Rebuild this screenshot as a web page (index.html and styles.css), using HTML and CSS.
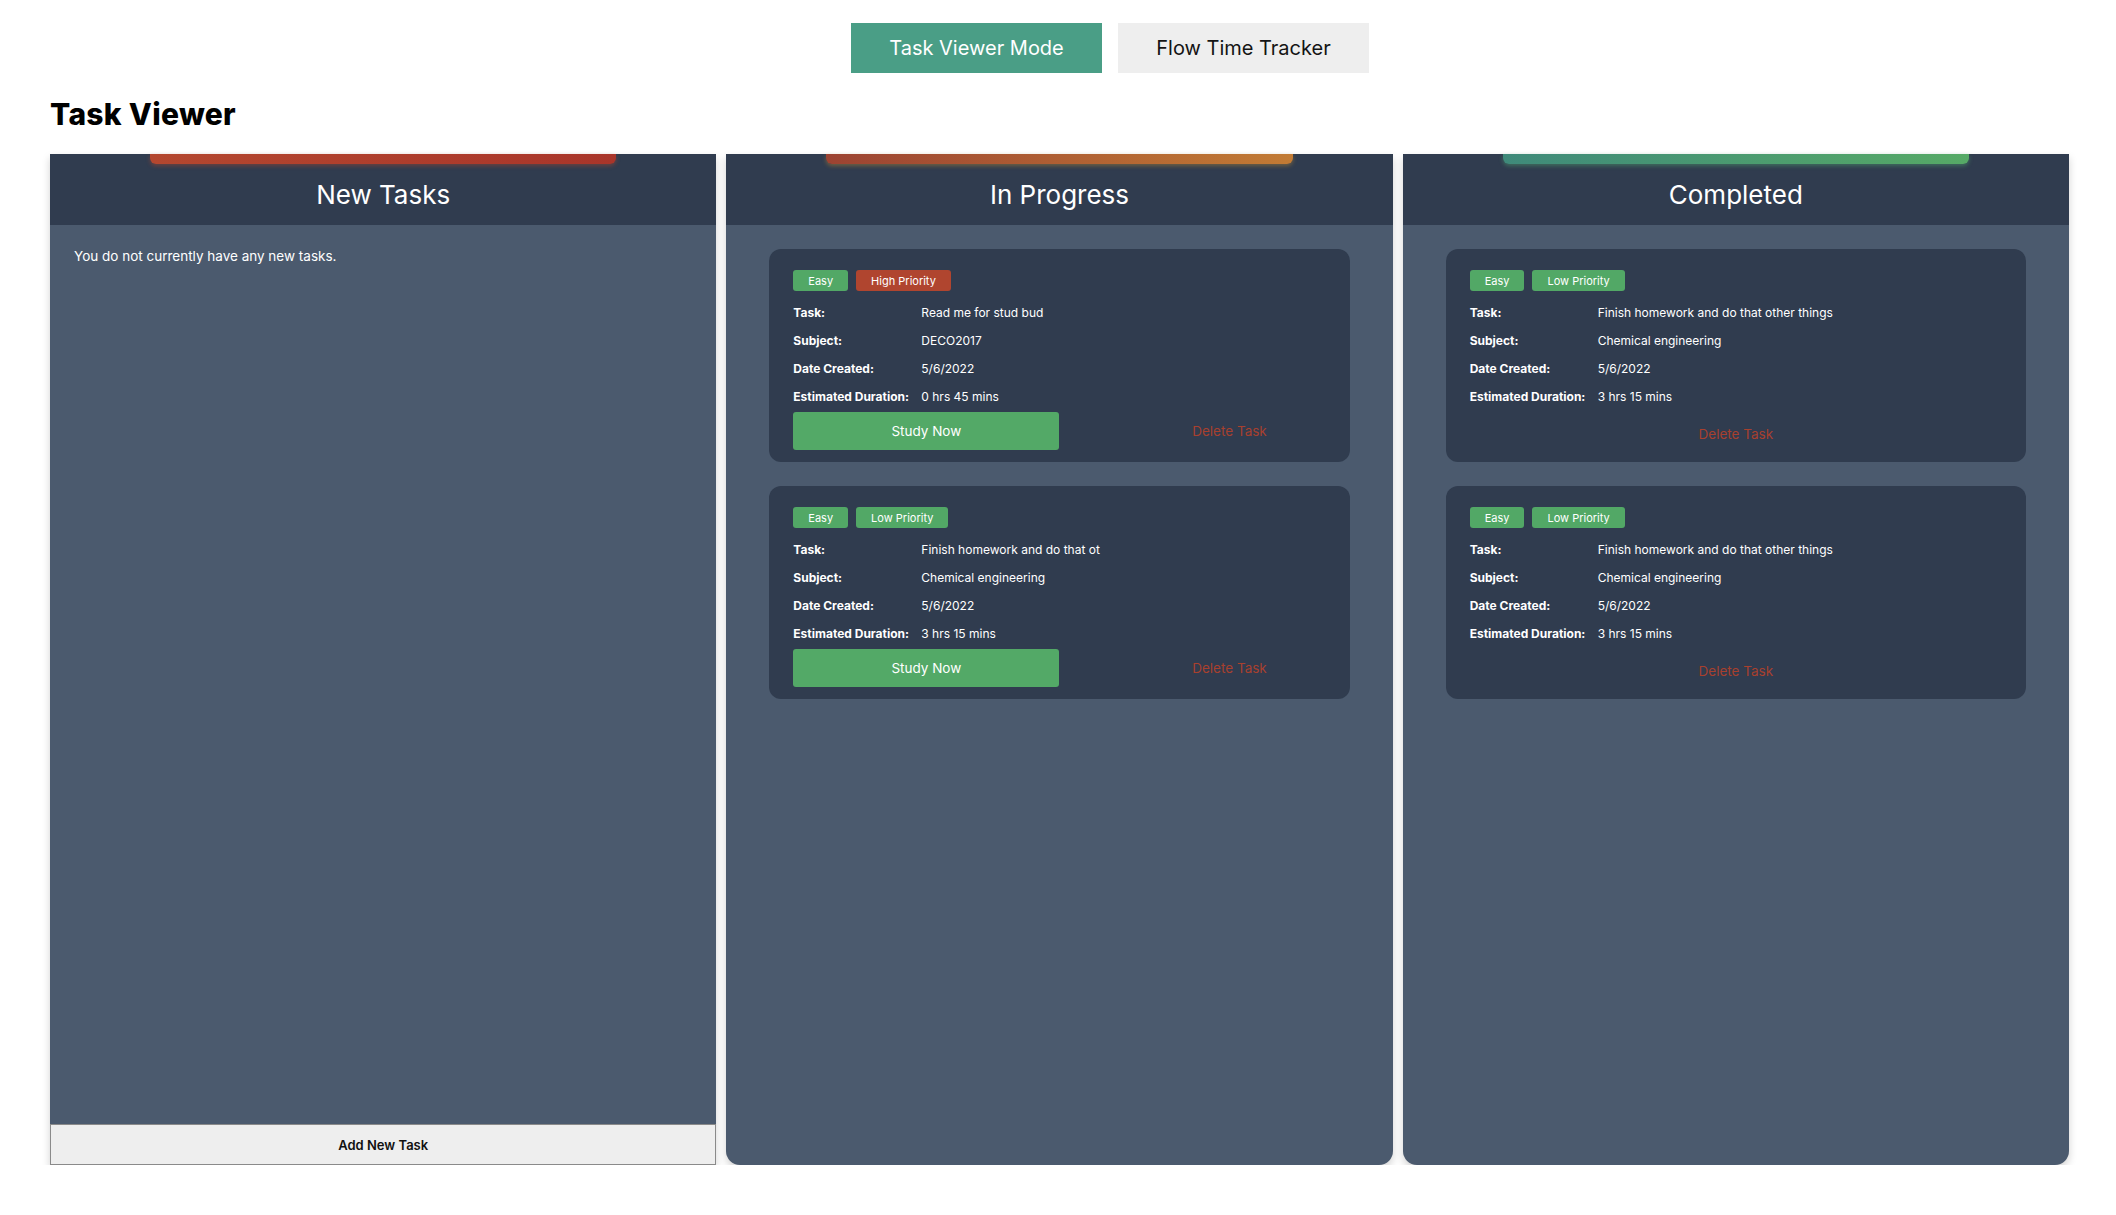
FILE: index.html
```html
<!DOCTYPE html>
<html lang="en">
<head>
<meta charset="utf-8">
<title>Task Viewer</title>
<link rel="stylesheet" href="styles.css">
</head>
<body>
  <nav class="mode-nav">
    <button class="mode-btn mode-btn--active">Task Viewer Mode</button>
    <button class="mode-btn">Flow Time Tracker</button>
  </nav>

  <h1 class="page-title">Task Viewer</h1>

  <main class="board">
    <section class="column column--new">
      <header class="column-head">
        <div class="strip strip--new"></div>
        <h2 class="column-title">New Tasks</h2>
      </header>
      <div class="column-body column-body--new">
        <p class="empty-msg">You do not currently have any new tasks.</p>
      </div>
      <button class="add-btn">Add New Task</button>
    </section>

    <section class="column column--rounded">
      <header class="column-head">
        <div class="strip strip--progress"></div>
        <h2 class="column-title">In Progress</h2>
      </header>
      <div class="column-body">
        <article class="card">
          <div class="tags">
            <span class="tag tag--green">Easy</span>
            <span class="tag tag--red">High Priority</span>
          </div>
          <dl class="details">
            <dt>Task:</dt><dd>Read me for stud bud</dd>
            <dt>Subject:</dt><dd>DECO2017</dd>
            <dt>Date Created:</dt><dd>5/6/2022</dd>
            <dt>Estimated Duration:</dt><dd>0 hrs 45 mins</dd>
          </dl>
          <div class="actions">
            <button class="study-btn">Study Now</button>
            <button class="delete-btn delete-btn--side">Delete Task</button>
          </div>
        </article>
        <article class="card">
          <div class="tags">
            <span class="tag tag--green">Easy</span>
            <span class="tag tag--green">Low Priority</span>
          </div>
          <dl class="details">
            <dt>Task:</dt><dd>Finish homework and do that ot</dd>
            <dt>Subject:</dt><dd>Chemical engineering</dd>
            <dt>Date Created:</dt><dd>5/6/2022</dd>
            <dt>Estimated Duration:</dt><dd>3 hrs 15 mins</dd>
          </dl>
          <div class="actions">
            <button class="study-btn">Study Now</button>
            <button class="delete-btn delete-btn--side">Delete Task</button>
          </div>
        </article>
      </div>
    </section>

    <section class="column column--rounded">
      <header class="column-head">
        <div class="strip strip--done"></div>
        <h2 class="column-title">Completed</h2>
      </header>
      <div class="column-body">
        <article class="card card--done">
          <div class="tags">
            <span class="tag tag--green">Easy</span>
            <span class="tag tag--green">Low Priority</span>
          </div>
          <dl class="details">
            <dt>Task:</dt><dd>Finish homework and do that other things</dd>
            <dt>Subject:</dt><dd>Chemical engineering</dd>
            <dt>Date Created:</dt><dd>5/6/2022</dd>
            <dt>Estimated Duration:</dt><dd>3 hrs 15 mins</dd>
          </dl>
          <div class="actions actions--center">
            <button class="delete-btn">Delete Task</button>
          </div>
        </article>
        <article class="card card--done">
          <div class="tags">
            <span class="tag tag--green">Easy</span>
            <span class="tag tag--green">Low Priority</span>
          </div>
          <dl class="details">
            <dt>Task:</dt><dd>Finish homework and do that other things</dd>
            <dt>Subject:</dt><dd>Chemical engineering</dd>
            <dt>Date Created:</dt><dd>5/6/2022</dd>
            <dt>Estimated Duration:</dt><dd>3 hrs 15 mins</dd>
          </dl>
          <div class="actions actions--center">
            <button class="delete-btn">Delete Task</button>
          </div>
        </article>
      </div>
    </section>
  </main>
</body>
</html>
```

FILE: styles.css
```css
* { box-sizing: border-box; }

html, body {
  margin: 0;
  padding: 0;
  background: #ffffff;
  font-family: Inter, "Noto Sans", "Liberation Sans", sans-serif;
  color: #111;
}

button {
  font-family: inherit;
  border: none;
  cursor: pointer;
}

.mode-nav {
  display: flex;
  justify-content: center;
  gap: 16px;
  padding: 23px 0 0 104px;
}

.mode-btn {
  width: 251px;
  height: 50px;
  background: #eeeeee;
  color: #141414;
  font-size: 20px;
  font-weight: 400;
}

.mode-btn--active {
  background: #4a9e86;
  color: #ffffff;
}

.page-title {
  margin: 23px 0 22px 50px;
  font-size: 30px;
  line-height: 36px;
  font-weight: 800;
  letter-spacing: 0.3px;
  color: #000;
}

.board {
  display: grid;
  grid-template-columns: repeat(3, 1fr);
  gap: 10px;
  margin: 0 47px 0 50px;
  height: 1011px;
}

.column {
  display: flex;
  flex-direction: column;
  background: #4b5a6e;
  box-shadow: 0 4px 8px rgba(0, 0, 0, 0.18);
}

.column--rounded {
  border-radius: 0 0 14px 14px;
}

.column-head {
  display: flex;
  flex-direction: column;
  background: #303c4f;
  height: 71px;
}

.strip {
  width: 70%;
  height: 10px;
  margin: 0 auto;
  border-radius: 0 0 6px 6px;
}

.strip--new {
  background: linear-gradient(90deg, #b4472f, #a9352a);
  box-shadow: 0 2px 4px rgba(180, 70, 45, 0.45);
}

.strip--progress {
  background: linear-gradient(90deg, #9c4332, #c27b34);
  box-shadow: 0 2px 4px rgba(190, 140, 50, 0.45);
}

.strip--done {
  background: linear-gradient(90deg, #3f8a7a, #56aa66);
  box-shadow: 0 2px 4px rgba(80, 170, 110, 0.45);
}

.column-title {
  margin: 0;
  height: 61px;
  line-height: 62px;
  text-align: center;
  font-size: 26px;
  font-weight: 400;
  color: #ffffff;
}

.column-body {
  flex: 1;
  display: flex;
  flex-direction: column;
  gap: 24px;
  padding: 24px 43px;
}

.column-body--new {
  padding: 21px 24px;
}

.empty-msg {
  margin: 0;
  font-size: 13.5px;
  line-height: 20px;
  color: #ffffff;
}

.add-btn {
  height: 41px;
  background: #eeeeee;
  border: 1px solid #8a8a8a;
  color: #111;
  font-size: 13px;
  font-weight: 600;
}

.card {
  background: #303c4f;
  border-radius: 12px;
  padding: 21px 24px 12px;
  color: #ffffff;
}

.card--done {
  padding-bottom: 9px;
}

.tags {
  display: flex;
  gap: 8px;
  height: 21px;
  margin-bottom: 7px;
}

.tag {
  display: inline-flex;
  align-items: center;
  justify-content: center;
  height: 21px;
  padding: 0 15px;
  border-radius: 3px;
  font-size: 11px;
  color: #ffffff;
}

.tag--green { background: #52a866; }
.tag--red { background: #b0452f; }

.details {
  display: grid;
  grid-template-columns: 128px 1fr;
  grid-auto-rows: 28px;
  align-items: center;
  margin: 0;
  font-size: 12px;
}

.details dt {
  font-weight: 700;
}

.details dd {
  margin: 0;
  font-weight: 400;
}

.actions {
  display: flex;
  align-items: center;
  height: 38px;
  margin-top: 2px;
}

.actions--center {
  justify-content: center;
  margin-top: 5px;
}

.study-btn {
  width: 266px;
  height: 38px;
  background: #53a967;
  color: #ffffff;
  border-radius: 3px;
  font-size: 13.5px;
}

.delete-btn {
  background: none;
  color: #a8402e;
  font-size: 13.5px;
  padding: 0;
}

.delete-btn--side {
  flex: 1;
  padding-left: 74px;
  text-align: center;
}
```
